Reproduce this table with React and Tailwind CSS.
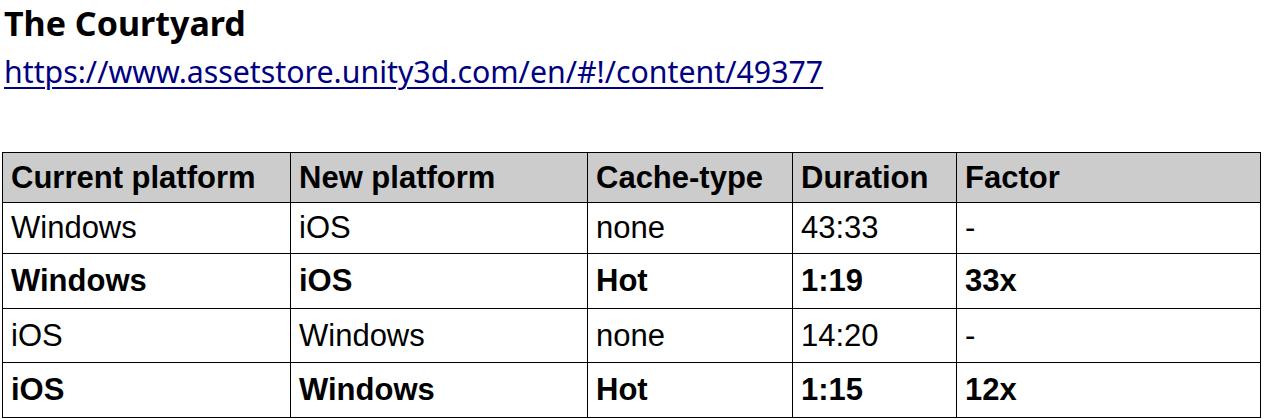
import React from 'react';

const rows = [
  { cur: 'Windows', next: 'iOS', cache: 'none', duration: '43:33', factor: '-', bold: false, h: 'h-[51px]' },
  { cur: 'Windows', next: 'iOS', cache: 'Hot', duration: '1:19', factor: '33x', bold: true, h: 'h-[55px]' },
  { cur: 'iOS', next: 'Windows', cache: 'none', duration: '14:20', factor: '-', bold: false, h: 'h-[54px]' },
  { cur: 'iOS', next: 'Windows', cache: 'Hot', duration: '1:15', factor: '12x', bold: true, h: 'h-[55px]' },
];

const App = () => {
  return (
    <div className="bg-white min-h-screen pl-[4px]">
      <h1 className="text-[34px] font-bold leading-[46px] text-black font-['Noto_Sans',sans-serif]">
        The Courtyard
      </h1>
      <a
        href="#"
        className="block mt-[9px] text-[30.3px] leading-[34px] text-[#000080] underline decoration-[2px] underline-offset-[4px] font-['Noto_Sans',sans-serif] w-fit"
      >
        https://www.assetstore.unity3d.com/en/#!/content/49377
      </a>

      <table className="mt-[63px] -ml-[2px] w-[1259px] border-collapse font-['Liberation_Sans',Arial,sans-serif] text-[31px] text-black">
        <colgroup>
          <col className="w-[288px]" />
          <col className="w-[297px]" />
          <col className="w-[205px]" />
          <col className="w-[164px]" />
          <col />
        </colgroup>
        <thead>
          <tr className="bg-[#cccccc] h-[50px]">
            <th className="border border-black px-[8px] py-0 leading-[36px] text-left font-bold">Current platform</th>
            <th className="border border-black px-[8px] py-0 leading-[36px] text-left font-bold">New platform</th>
            <th className="border border-black px-[8px] py-0 leading-[36px] text-left font-bold">Cache-type</th>
            <th className="border border-black px-[8px] py-0 leading-[36px] text-left font-bold">Duration</th>
            <th className="border border-black px-[8px] py-0 leading-[36px] text-left font-bold">Factor</th>
          </tr>
        </thead>
        <tbody>
          {rows.map((r, i) => (
            <tr key={i} className={`${r.h} ${r.bold ? 'font-bold' : 'font-normal'}`}>
              <td className="border border-black px-[8px] py-0 leading-[36px]">{r.cur}</td>
              <td className="border border-black px-[8px] py-0 leading-[36px]">{r.next}</td>
              <td className="border border-black px-[8px] py-0 leading-[36px]">{r.cache}</td>
              <td className="border border-black px-[8px] py-0 leading-[36px]">{r.duration}</td>
              <td className="border border-black px-[8px] py-0 leading-[36px]">{r.factor}</td>
            </tr>
          ))}
        </tbody>
      </table>
    </div>
  );
};

export default App;
